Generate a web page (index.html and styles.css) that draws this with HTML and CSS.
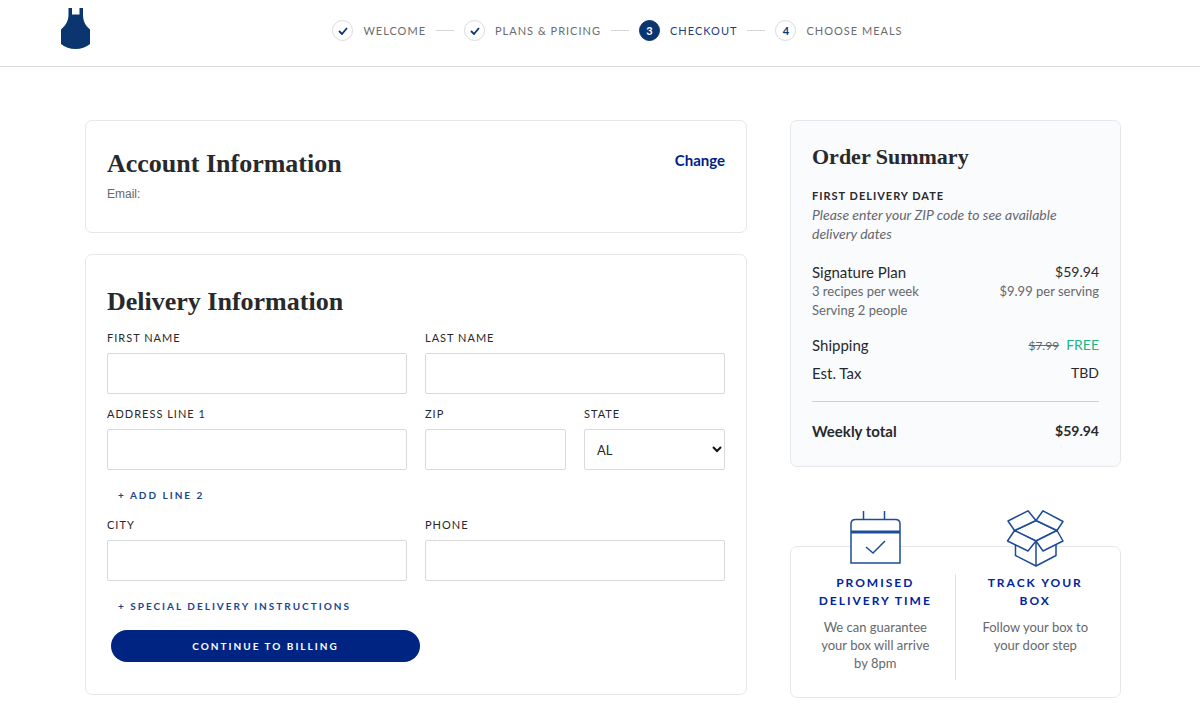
FILE: index.html
```html
<!DOCTYPE html>
<html lang="en">
<head>
<meta charset="utf-8">
<title>Checkout</title>
<meta name="viewport" content="width=device-width, initial-scale=1">
<link rel="stylesheet" href="styles.css">
</head>
<body>
<header class="site-header">
  <a class="logo" href="#" aria-label="Home">
    <svg width="30" height="42" viewBox="0 0 30 42" aria-hidden="true"><path fill="#0b356f" d="M7.500 0h3.500v6.500h7.500V0H22v6c0 7 2 11 7 15.500V36q-6 5-14.500 5T0 36V21.500C5 17 7.500 13 7.500 6z"/></svg>
  </a>
  <ol class="steps">
    <li class="step"><span class="step-mark"><svg width="10" height="8" viewBox="0 0 10 8" aria-hidden="true"><path d="M1 4l3 3 5-6" fill="none" stroke="#0b356f" stroke-width="1.800"/></svg></span>Welcome</li>
    <li class="step"><span class="step-mark"><svg width="10" height="8" viewBox="0 0 10 8" aria-hidden="true"><path d="M1 4l3 3 5-6" fill="none" stroke="#0b356f" stroke-width="1.800"/></svg></span>Plans &amp; Pricing</li>
    <li class="step step-current" aria-current="step"><span class="step-mark">3</span>Checkout</li>
    <li class="step"><span class="step-mark">4</span>Choose Meals</li>
  </ol>
</header>

<main class="page">
  <div class="column">
    <section class="card account">
      <div>
        <h1 class="title">Account Information</h1>
        <p class="email">Email:</p>
      </div>
      <a class="change" href="#">Change</a>
    </section>

    <section class="card delivery">
      <h2 class="title">Delivery Information</h2>
      <form class="form">
        <div class="row">
          <div class="field"><label for="first">First Name</label><input id="first" type="text"></div>
          <div class="field"><label for="last">Last Name</label><input id="last" type="text"></div>
        </div>
        <div class="row">
          <div class="field"><label for="address">Address Line 1</label><input id="address" type="text"></div>
          <div class="row">
            <div class="field"><label for="zip">ZIP</label><input id="zip" type="text"></div>
            <div class="field"><label for="state">State</label>
              <div class="select"><select id="state"><option>AL</option></select>
              <svg class="chevron" width="10" height="7" viewBox="0 0 10 7" aria-hidden="true"><path d="M1 1l4 4 4-4" fill="none" stroke="#111" stroke-width="2"/></svg></div>
            </div>
          </div>
        </div>
        <button class="add" type="button">+ Add Line 2</button>
        <div class="row">
          <div class="field"><label for="city">City</label><input id="city" type="text"></div>
          <div class="field"><label for="phone">Phone</label><input id="phone" type="tel"></div>
        </div>
        <button class="add" type="button">+ Special Delivery Instructions</button>
        <button class="submit" type="submit">Continue to Billing</button>
      </form>
    </section>
  </div>

  <aside class="side">
    <section class="card summary">
      <h2 class="summary-title">Order Summary</h2>
      <h3 class="date-label">First Delivery Date</h3>
      <p class="date-note">Please enter your ZIP code to see available delivery dates</p>
      <div class="group">
        <div class="line"><span>Signature Plan</span><span class="amount">$59.94</span></div>
        <div class="line detail"><span>3 recipes per week</span><span>$9.99 per serving</span></div>
        <div class="line detail"><span>Serving 2 people</span></div>
      </div>
      <div class="group fees">
        <div class="line"><span>Shipping</span><span class="amount"><s class="old">$7.99</s><span class="free">FREE</span></span></div>
        <div class="line"><span>Est. Tax</span><span class="amount">TBD</span></div>
      </div>
      <div class="line total"><span>Weekly total</span><span class="amount">$59.94</span></div>
    </section>

    <section class="card perks">
      <article class="perk">
        <svg class="perk-icon" width="60" height="58" viewBox="0 0 60 58" aria-hidden="true"><g fill="#fff" stroke="#1d4b98" stroke-width="1.500"><path d="M17.500 1v8M38.500 1v8"/><path d="M5 53V14q0-4.500 4.500-4.500h40q4.500 0 4.500 4.500v39z"/><path d="M5 22h49" stroke-width="2.800"/><path fill="none" d="M20 37l7 6 12-12"/></g></svg>
        <div class="perk-text">
          <h3>Promised Delivery Time</h3>
          <p>We can guarantee your box will arrive by 8pm</p>
        </div>
      </article>
      <article class="perk">
        <svg class="perk-icon" width="60" height="58" viewBox="0 0 60 58" aria-hidden="true"><g fill="#fff" stroke="#1d4b98" stroke-width="1.500" stroke-linejoin="round"><path d="M10.500 30v15.500L31 56l20-10.500V30L31 20z"/><path d="M31 31v25"/><path d="M31 10.500L9.500 20.500 31 31l21-10.500z"/><path d="M31 10.500L23 .8 3 11l6.500 9.500zM31 10.500L38 .8 58 11.500l-6 9zM9.500 20.500L2.500 31 23 41l8-10zM52 20.500l6 10.500-20 10-7-10z"/></g></svg>
        <div class="perk-text">
          <h3>Track Your Box</h3>
          <p>Follow your box to your door step</p>
        </div>
      </article>
    </section>
  </aside>
</main>
</body>
</html>
```
FILE: styles.css
```css
* { box-sizing: border-box; }

body {
  margin: 0;
  background: #fff;
  color: #28292c;
  font: 15px/20px Lato, "Open Sans", sans-serif;
}

h1, h2, h3, p, ol { margin: 0; padding: 0; }

.site-header {
  display: grid;
  grid-template-columns: 1fr auto 1fr;
  padding: 8px 26px 17px 61px;
  border-bottom: 1px solid #d9dadc;
}

.logo { display: block; height: 41px; justify-self: start; }
.logo svg { display: block; }

.steps {
  display: flex;
  align-items: center;
  padding-top: 4px;
  list-style: none;
}

.step {
  display: flex;
  align-items: center;
  gap: 10px;
  color: #6a6c71;
  font-size: 11px;
  letter-spacing: 1px;
  text-transform: uppercase;
}

.step + .step::before {
  content: "";
  width: 18px;
  margin-left: 10px;
  border-top: 1px solid #d5d6d9;
}

.step-mark {
  display: grid;
  place-items: center;
  width: 21px;
  height: 21px;
  border: 1px solid #d9dadf;
  border-radius: 50%;
  color: #0b356f;
  font-size: 11px;
  font-weight: 700;
  letter-spacing: 0;
}

.step-current { color: #1c3f80; }
.step-current .step-mark { border-color: #0b356f; background: #0b356f; color: #fff; }

.page {
  display: grid;
  grid-template-columns: minmax(0, 2fr) minmax(0, 1fr);
  align-items: start;
  gap: 43px;
  padding: 53px 79px 27px 85px;
}

.column { display: grid; gap: 21px; }

.card {
  padding: 21px;
  border: 1px solid #e6e7ea;
  border-radius: 7px;
}

.account {
  display: flex;
  justify-content: space-between;
  padding-top: 27px;
  padding-bottom: 24px;
}

.title { font: 700 26px/32px "Liberation Serif", serif; }

.email {
  color: #66686c;
  font: 12px/28px "Liberation Sans", sans-serif;
}

.change {
  color: #001f8a;
  font-weight: 700;
  line-height: 24px;
  text-decoration: none;
}

.delivery { padding-top: 31px; padding-bottom: 32px; }

.form {
  display: grid;
  gap: 12px;
  margin-top: 12px;
}

.row {
  display: grid;
  grid-template-columns: repeat(2, minmax(0, 1fr));
  gap: 18px;
}

.field label {
  display: block;
  margin-bottom: 7px;
  font-size: 11px;
  line-height: 16px;
  letter-spacing: 1px;
  text-transform: uppercase;
}

.field input, .field select {
  display: block;
  width: 100%;
  height: 41px;
  padding: 0 12px;
  border: 1px solid #d8d9db;
  border-radius: 2px;
  background: #fff;
  color: #28292c;
  font: 13px/20px Lato, sans-serif;
}

.field select { appearance: none; }
.select { position: relative; }
.chevron { position: absolute; top: 17px; right: 3px; pointer-events: none; }

.add {
  justify-self: start;
  margin: 5px 0 2px 11px;
  padding: 0;
  border: 0;
  background: none;
  color: #1c4590;
  font: 700 10px/16px Lato, sans-serif;
  letter-spacing: 2px;
  text-transform: uppercase;
}

.submit {
  width: 50%;
  height: 32px;
  margin: 2px 0 0 4px;
  border: 0;
  border-radius: 16px;
  background: #002482;
  color: #fff;
  font: 700 10px/16px Lato, sans-serif;
  letter-spacing: 2px;
  text-transform: uppercase;
}

.summary { padding-top: 22px; padding-bottom: 25px; background: #fafbfd; }
.summary-title { font: 700 22px/28px "Liberation Serif", serif; }

.date-label {
  margin-top: 15px;
  font-size: 11px;
  line-height: 19px;
  letter-spacing: 1px;
  text-transform: uppercase;
}

.date-note {
  color: #66686c;
  font-size: 14px;
  font-style: italic;
  line-height: 19px;
}

.group { margin-top: 19px; }
.line { display: flex; justify-content: space-between; }
.amount { font-size: 14px; }
.detail { color: #66686c; font-size: 13px; line-height: 19px; }
.fees { display: grid; gap: 8px; margin-top: 15px; }
.old { margin-right: 7px; color: #66686c; font-size: 12px; line-height: 16px; }
.free { color: #1db584; }

.total {
  margin-top: 18px;
  padding-top: 19px;
  border-top: 1px solid #cfd2d6;
  font-weight: 700;
}

.perks {
  display: grid;
  grid-template-columns: repeat(2, minmax(0, 1fr));
  margin-top: 79px;
  padding: 0 5px 17px;
}

.perk {
  display: flex;
  flex-direction: column;
  align-items: center;
  text-align: center;
}

.perk-icon { margin: -37px 0 6px; }
.perk-text { flex: 1; width: 100%; padding: 0 20px 8px; }
.perk:first-child .perk-text { border-right: 1px solid #e1e2e5; }

.perk h3 {
  color: #0024a0;
  font-size: 12px;
  line-height: 18px;
  letter-spacing: 2px;
  text-transform: uppercase;
}

.perk p {
  margin-top: 8px;
  color: #66686c;
  font-size: 13px;
  line-height: 18px;
}
```
